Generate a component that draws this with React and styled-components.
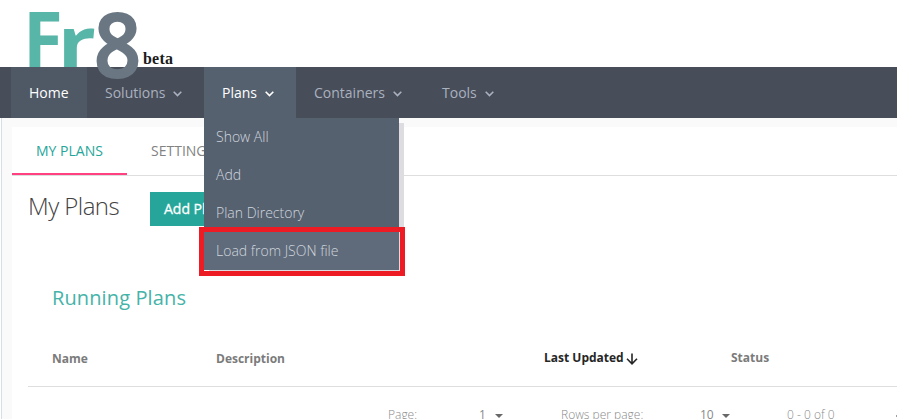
import React from "react";
import styled, { createGlobalStyle, css } from "styled-components";

const GlobalStyle = createGlobalStyle`
  *, *::before, *::after { box-sizing: border-box; }
  body {
    margin: 0;
    overflow: hidden;
    background: #fff;
    font-family: "Open Sans", sans-serif;
  }
`;

const Page = styled.div`
  display: flex;
  flex-direction: column;
  height: 419px;
  overflow: hidden;
`;

const Header = styled.header`
  height: 67px;
  display: flex;
  align-items: flex-start;
  padding-left: 25px;
  position: relative;
  z-index: 2;
`;

const Logo = styled.svg`
  width: 118px;
  height: 84px;
  flex: none;
  overflow: visible;
  font-family: "Open Sans", sans-serif;
  font-weight: 700;
`;

const Beta = styled.span`
  margin-top: 50px;
  font: 700 16px/18px "Liberation Serif", serif;
  letter-spacing: 0.2px;
  color: #1c1c1c;
`;

const NavBar = styled.nav`
  height: 51px;
  flex: none;
  display: flex;
  padding-left: 11px;
  background: #474d59;
  position: relative;
  z-index: 1;
`;

const NavItem = styled.div`
  position: relative;
  width: ${(p) => p.$width}px;
  height: 51px;
  padding-left: 18px;
  display: flex;
  align-items: center;
  font-size: 14px;
  line-height: 20px;
  color: ${(p) => (p.$bright ? "#fff" : "#aab1bf")};
  background: ${(p) => p.$bg || "transparent"};
`;

const NavLabel = styled.span`
  white-space: nowrap;
`;

const Chevron = styled.svg`
  position: relative;
  width: 9px;
  height: 6px;
  margin-left: 8px;
  top: 1px;
  fill: none;
  stroke: currentColor;
  stroke-width: 1.6;
`;

const Menu = styled.div`
  position: absolute;
  top: 51px;
  left: 0;
  width: 195px;
  background: #56616f;
  box-shadow: 5px 5px 0 #dddde1;
`;

const MenuItem = styled.div`
  height: 38px;
  padding-left: 12px;
  font-size: 14px;
  font-weight: 300;
  line-height: 37px;
  white-space: nowrap;
  color: #d0d6df;
  background: ${(p) => (p.$active ? "#5f6b7a" : "transparent")};
`;

const Highlight = styled.div`
  position: absolute;
  left: -5px;
  top: 109px;
  width: 206px;
  height: 49px;
  border: 5px solid #ed1c24;
`;

const Main = styled.main`
  flex: 1;
  margin-left: 1px;
  border-left: 1px solid #d9dde4;
  padding: 9px 0 0 10px;
  background: #fafafa;
`;

const Panel = styled.section`
  height: 292px;
  background: #fff;
`;

const Tabs = styled.div`
  height: 49px;
  display: flex;
  border-bottom: 1px solid #dedede;
`;

const Tab = styled.div`
  height: 48px;
  padding: 0 24px;
  font-size: 14px;
  line-height: 48px;
  white-space: nowrap;
  color: #828282;
  ${(p) =>
    p.$active &&
    css`
      width: 115px;
      color: #26a69a;
      border-bottom: 2px solid #ff4081;
    `}
`;

const TitleRow = styled.div`
  display: flex;
  align-items: flex-start;
  padding: 16px 0 0 16px;
  height: 99px;
`;

const Title = styled.h1`
  width: 122px;
  margin: 0;
  font-size: 24px;
  font-weight: 300;
  line-height: 28px;
  letter-spacing: -0.55px;
  color: #424242;
`;

const Button = styled.button`
  height: 34px;
  padding: 0 14px;
  border: 0;
  background: #26a69a;
  color: #fff;
  font: 500 14px/34px "Open Sans", sans-serif;
  -webkit-text-stroke: 0.3px #fff;
`;

const Subtitle = styled.h2`
  margin: 0;
  padding: 9px 0 0 40px;
  height: 52px;
  font-size: 20px;
  font-weight: 400;
  line-height: 28px;
  letter-spacing: 0.12px;
  color: #45b3a8;
`;

const TableHead = styled.div`
  height: 60px;
  margin-left: 16px;
  padding: 21px 0 0 24px;
  display: grid;
  grid-template-columns: 164px 328px 187px 1fr;
  border-bottom: 1px solid #dedede;
`;

const HeadCell = styled.div`
  display: flex;
  align-items: center;
  height: ${(p) => (p.$raised ? 18 : 20)}px;
  font-size: 12px;
  font-weight: 700;
  white-space: nowrap;
  color: ${(p) => (p.$sorted ? "#262626" : "#7b7b7b")};
`;

const SortArrow = styled.svg`
  width: 12px;
  height: 12px;
  margin: 4px 0 0 2px;
  fill: none;
  stroke: currentColor;
  stroke-width: 1.6;
`;

const Pagination = styled.div`
  display: grid;
  grid-template-columns: 91px 82px 139px 87px 108px auto;
  padding: 18px 0 0 376px;
  height: 33px;
  font-size: 12px;
  line-height: 20px;
  font-weight: 300;
  color: #8a8a8a;
  white-space: nowrap;
`;

const Picker = styled.span`
  display: flex;
  font-weight: 400;
`;

const Caret = styled.svg`
  width: 8px;
  height: 4px;
  margin: 9px 0 0 ${(p) => p.$gap}px;
  fill: #686868;
`;

const Previous = styled.svg`
  width: 8px;
  height: 12px;
  margin-top: 5px;
  fill: none;
  stroke: #777;
  stroke-width: 1.6;
`;

const Down = () => (
  <Chevron viewBox="0 0 9 6">
    <path d="M.7 .8 4.5 4.6 8.3 .8" />
  </Chevron>
);

const DropCaret = ({ gap }) => (
  <Caret viewBox="0 0 8 4" $gap={gap}>
    <path d="M0 0h8L4 4z" />
  </Caret>
);

export default function App() {
  return (
    <Page>
      <GlobalStyle />
      <Header>
        <Logo viewBox="0 0 118 84">
          <text transform="translate(-2 67) scale(.94 1)" fontSize="77" fill="#57b6a8">F</text>
          <text transform="translate(32.6 67) scale(1.23 1)" fontSize="69" fill="#57b6a8">r</text>
          <text transform="translate(69 77.2) scale(.93 1)" fontSize="88.5" fontWeight="600" fill="#6a7783" stroke="#6a7783" strokeWidth="2">8</text>
        </Logo>
        <Beta>beta</Beta>
      </Header>
      <NavBar>
        <NavItem $width={76} $bg="#4e5965" $bright>
          <NavLabel>Home</NavLabel>
        </NavItem>
        <NavItem $width={117}>
          <NavLabel>Solutions</NavLabel>
          <Down />
        </NavItem>
        <NavItem $width={92} $bg="#56616f" $bright>
          <NavLabel>Plans</NavLabel>
          <Down />
          <Menu>
            <MenuItem>Show All</MenuItem>
            <MenuItem>Add</MenuItem>
            <MenuItem>Plan Directory</MenuItem>
            <MenuItem $active>Load from JSON file</MenuItem>
            <Highlight />
          </Menu>
        </NavItem>
        <NavItem $width={128}>
          <NavLabel>Containers</NavLabel>
          <Down />
        </NavItem>
        <NavItem $width={92}>
          <NavLabel>Tools</NavLabel>
          <Down />
        </NavItem>
      </NavBar>
      <Main>
        <Panel>
          <Tabs>
            <Tab $active>MY PLANS</Tab>
            <Tab>SETTINGS</Tab>
          </Tabs>
          <TitleRow>
            <Title>My Plans</Title>
            <Button>Add Plan</Button>
          </TitleRow>
          <Subtitle>Running Plans</Subtitle>
          <TableHead>
            <HeadCell>Name</HeadCell>
            <HeadCell>Description</HeadCell>
            <HeadCell $sorted $raised>
              Last Updated
              <SortArrow viewBox="0 0 12 12">
                <path d="M6 .5v10M1 5.8l5 5 5-5" />
              </SortArrow>
            </HeadCell>
            <HeadCell $raised>Status</HeadCell>
          </TableHead>
          <Pagination>
            <span>Page:</span>
            <Picker>1<DropCaret gap={9} /></Picker>
            <span>Rows per page:</span>
            <Picker>10<DropCaret gap={8} /></Picker>
            <span>0 - 0 of 0</span>
            <Previous viewBox="0 0 8 12">
              <path d="M7 1 2 6l5 5" />
            </Previous>
          </Pagination>
        </Panel>
      </Main>
    </Page>
  );
}
